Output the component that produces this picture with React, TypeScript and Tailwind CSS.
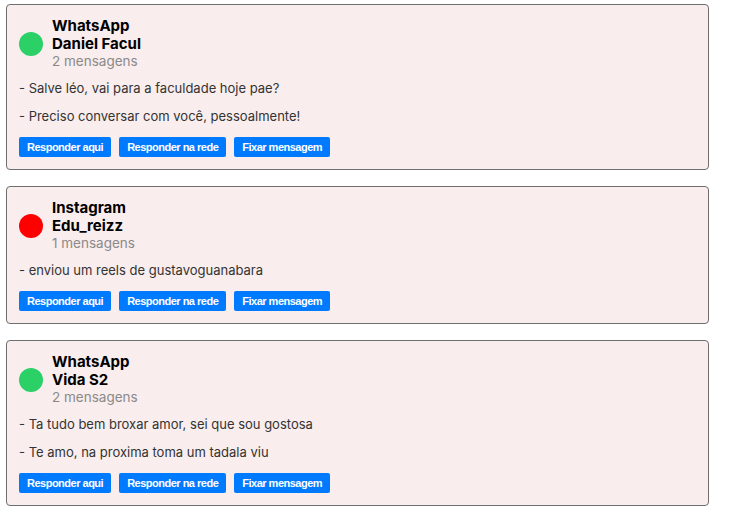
import React from 'react';

interface Notification {
  id: number;
  network: string;
  sender: string;
  color: string;
  messages: string[];
}

const notifications: Notification[] = [
  {
    id: 1,
    network: 'WhatsApp',
    sender: 'Daniel Facul',
    color: 'bg-[#2bd167]',
    messages: ['- Salve léo, vai para a faculdade hoje pae?', '- Preciso conversar com você, pessoalmente!'],
  },
  {
    id: 2,
    network: 'Instagram',
    sender: 'Edu_reizz',
    color: 'bg-[#ff0000]',
    messages: ['- enviou um reels de gustavoguanabara'],
  },
  {
    id: 3,
    network: 'WhatsApp',
    sender: 'Vida S2',
    color: 'bg-[#2bd167]',
    messages: ['- Ta tudo bem broxar amor, sei que sou gostosa', '- Te amo, na proxima toma um tadala viu'],
  },
];

const actions = ['Responder aqui', 'Responder na rede', 'Fixar mensagem'];

export default function App() {
  return (
    <div className="min-h-[528px] bg-white pt-[4px] font-['Inter',sans-serif]">
      {notifications.map((n) => (
        <div
          key={n.id}
          className="ml-[6px] mb-[16px] w-[703px] rounded-[4px] border border-[#6e6e6e] bg-[#f9eded] p-[12px]"
        >
          {/* Header */}
          <div className="flex items-center gap-[9px]">
            <div className={`h-[24px] w-[24px] rounded-full ${n.color}`} />
            <div>
              <div className="text-[15px] font-bold leading-[18px] text-black">{n.network}</div>
              <div className="text-[15px] font-bold leading-[18px] text-black">{n.sender}</div>
              <div className="text-[13.5px] leading-[17px] text-[#8a8a8a]">
                {n.messages.length} mensagens
              </div>
            </div>
          </div>

          {/* Messages */}
          <div className="mt-[10px] flex flex-col gap-[12px]">
            {n.messages.map((m, i) => (
              <p key={i} className="text-[13px] leading-[16px] text-[#333]">
                {m}
              </p>
            ))}
          </div>

          {/* Actions */}
          <div className="mt-[13px] flex gap-[8px]">
            {actions.map((a) => (
              <button
                key={a}
                className="h-[20px] rounded-[2px] bg-[#007bff] px-[8px] font-['Liberation_Sans',sans-serif] text-[11px] font-bold leading-[20px] tracking-[-0.5px] text-white"
              >
                {a}
              </button>
            ))}
          </div>
        </div>
      ))}
    </div>
  );
}
